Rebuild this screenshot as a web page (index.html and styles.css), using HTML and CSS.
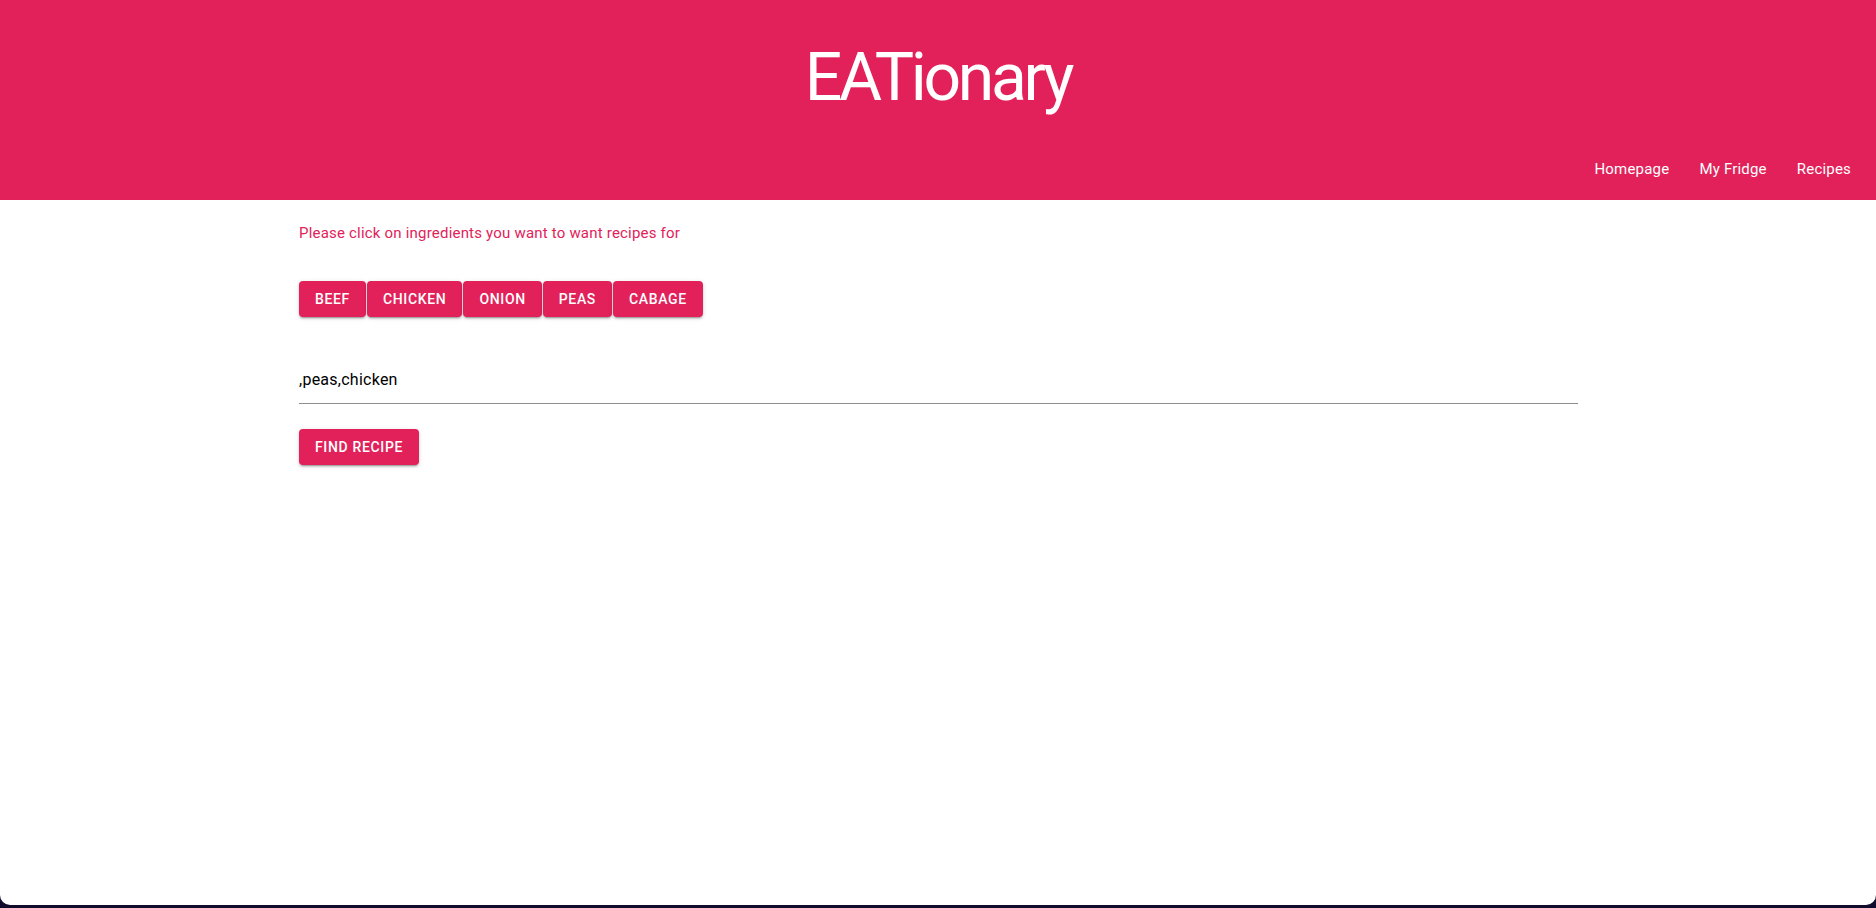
FILE: index.html
```html
<!DOCTYPE html>
<html lang="en">
<head>
<meta charset="utf-8">
<title>EATionary</title>
<link rel="stylesheet" href="styles.css">
</head>
<body>
<div class="window">
  <header class="header">
    <h1 class="brand">EATionary</h1>
    <nav class="nav">
      <a class="nav-link" href="#">Homepage</a>
      <a class="nav-link" href="#">My Fridge</a>
      <a class="nav-link" href="#">Recipes</a>
    </nav>
  </header>
  <main class="content">
    <p class="hint">Please click on ingredients you want to want recipes for</p>
    <div class="chips">
      <button class="btn">Beef</button>
      <button class="btn">Chicken</button>
      <button class="btn">Onion</button>
      <button class="btn">Peas</button>
      <button class="btn">Cabage</button>
    </div>
    <div class="field">
      <input class="field-input" type="text" value=",peas,chicken">
    </div>
    <div class="actions">
      <button class="btn">Find Recipe</button>
    </div>
  </main>
</div>
</body>
</html>
```

FILE: styles.css
```css
html {
  background: #110c2c;
}
body {
  margin: 0;
  font-family: Roboto, "Liberation Sans", Arial, sans-serif;
}
.window {
  height: 905px;
  background: #ffffff;
  border-radius: 0 0 10px 10px;
  overflow: hidden;
}
.header {
  height: 200px;
  box-sizing: border-box;
  background: #e2215a;
  padding-top: 38px;
  display: flex;
  flex-direction: column;
}
.brand {
  margin: 0;
  text-align: center;
  color: #ffffff;
  font-size: 66px;
  line-height: 79px;
  font-weight: 400;
  letter-spacing: -3.3px;
  padding-left: 0;
}
.nav {
  margin-top: 42px;
  display: flex;
  justify-content: flex-end;
  gap: 30px;
  padding-right: 25px;
}
.nav-link {
  color: #ffffff;
  text-decoration: none;
  font-size: 15px;
  line-height: 20px;
  letter-spacing: 0.2px;
}
.content {
  width: 1280px;
  margin: 0 auto;
  padding-top: 23px;
  box-sizing: border-box;
  padding-left: 1px;
}
.hint {
  margin: 0;
  color: #e2215a;
  font-size: 15px;
  line-height: 20px;
  letter-spacing: 0.2px;
}
.chips {
  margin-top: 38px;
  display: flex;
  gap: 1px;
}
.btn {
  font-family: Roboto, "Liberation Sans", Arial, sans-serif;
  background: #e2215a;
  color: #ffffff;
  border: 0;
  border-radius: 4px;
  height: 36px;
  padding: 0 16px;
  font-size: 14px;
  font-weight: 500;
  letter-spacing: 0.65px;
  text-transform: uppercase;
  box-shadow: 0 3px 1px -2px rgba(0,0,0,0.2), 0 2px 2px 0 rgba(0,0,0,0.14), 0 1px 5px 0 rgba(0,0,0,0.12);
}
.field {
  margin-top: 47px;
  border-bottom: 1px solid #8f8f8f;
}
.field-input {
  display: block;
  width: 100%;
  box-sizing: border-box;
  border: 0;
  outline: none;
  padding: 6px 0 14px;
  margin: 0;
  font-family: Roboto, "Liberation Sans", Arial, sans-serif;
  font-size: 16px;
  line-height: 19px;
  height: 39px;
  letter-spacing: 0.25px;
  color: #000000;
  background: transparent;
}
.actions {
  margin-top: 25px;
}
```
